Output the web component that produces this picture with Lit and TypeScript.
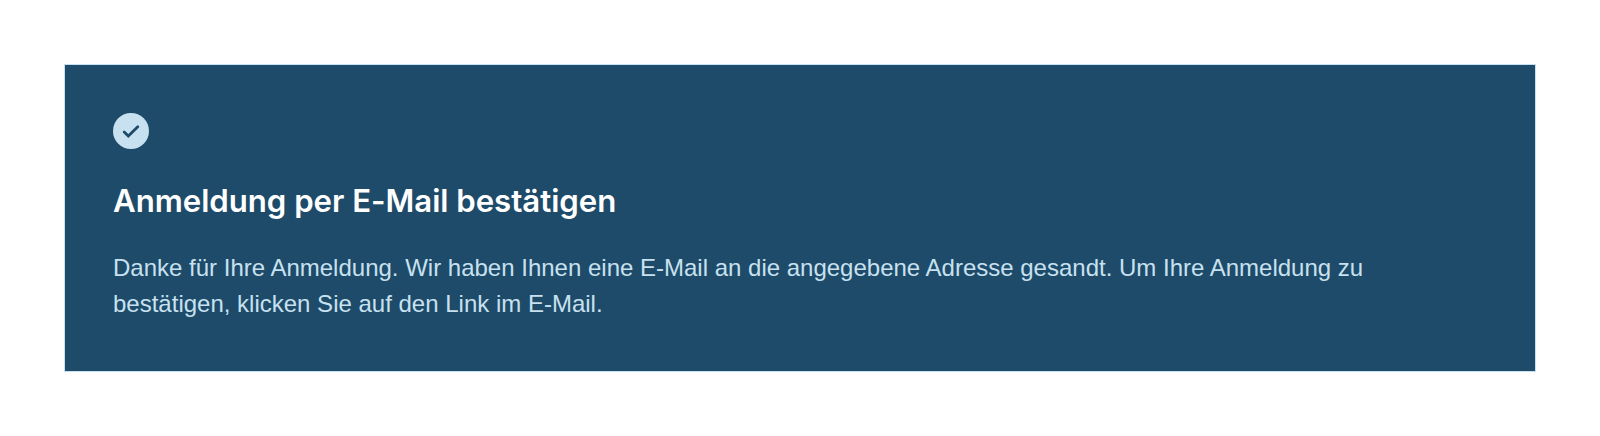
import { LitElement, html, css } from "lit";

class AppRoot extends LitElement {
  static styles = css`
    :host { display: block; padding: 64px; background: #fff; font-family: "Liberation Sans", Arial, sans-serif; }
    .card { box-sizing: border-box; height: 308px; padding: 48px; border: 1px solid #c8e1f0; background: #1e4b69; color: #c8e1f0; }
    .icon { display: block; width: 36px; height: 36px; }
    .title { margin: 32px 0 0; font-family: Inter, "Liberation Sans", sans-serif; font-size: 31.2px; line-height: 40px; font-weight: 620; letter-spacing: -0.03px; color: #fff; }
    .text { margin: 29px 0 0; font-size: 24px; line-height: 36px; max-width: 1280px; }
  `;
  render() {
    return html`<section class="card">
      <svg class="icon" viewBox="0 0 36 36"><circle cx="18" cy="18" r="18" fill="#c8e1f0"/><path d="M11.2 19 15.3 23 24.8 13.8" fill="none" stroke="#1e4b69" stroke-width="2.8" stroke-linecap="round"/></svg>
      <h2 class="title">Anmeldung per E-Mail bestätigen</h2>
      <p class="text">Danke für Ihre Anmeldung. Wir haben Ihnen eine E-Mail an die angegebene Adresse gesandt. Um Ihre Anmeldung zu bestätigen, klicken Sie auf den Link im E-Mail.</p>
    </section>`;
  }
}
customElements.define("app-root", AppRoot);
